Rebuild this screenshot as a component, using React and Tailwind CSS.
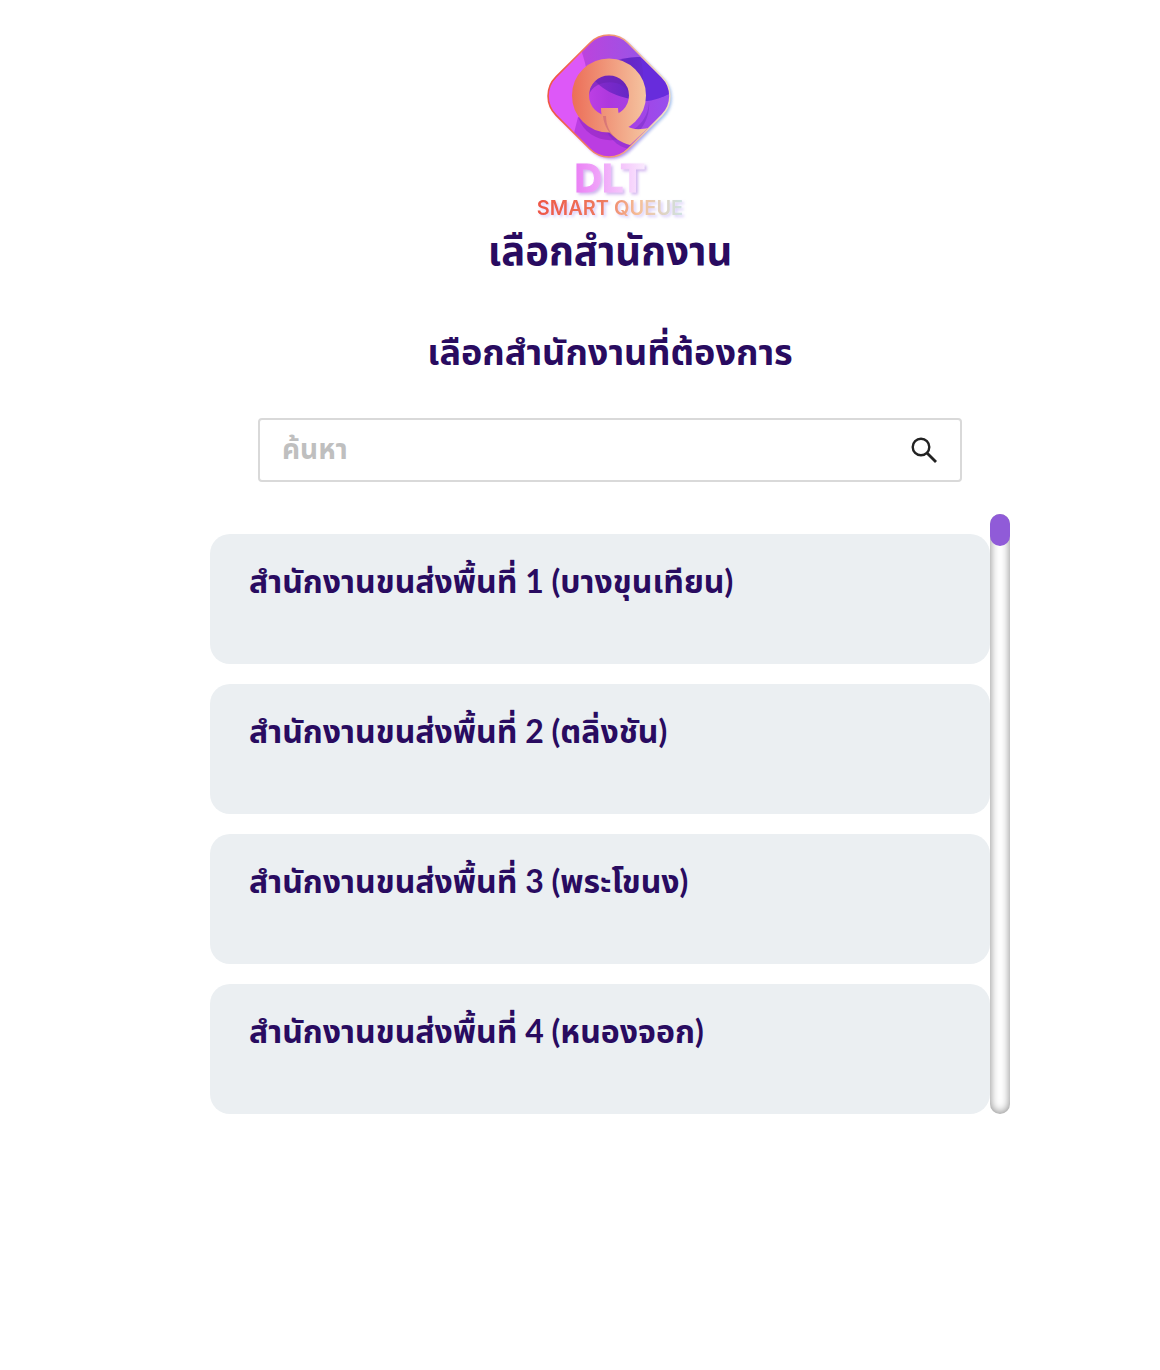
import React, { useState } from "react";

const offices = [
  "สำนักงานขนส่งพื้นที่ 1 (บางขุนเทียน)",
  "สำนักงานขนส่งพื้นที่ 2 (ตลิ่งชัน)",
  "สำนักงานขนส่งพื้นที่ 3 (พระโขนง)",
  "สำนักงานขนส่งพื้นที่ 4 (หนองจอก)",
];

function Logo() {
  return (
    <svg className="h-[200px] w-[160px]" viewBox="0 0 160 200" role="img" aria-label="DLT Smart Queue">
      <defs>
        <linearGradient id="base" gradientUnits="userSpaceOnUse" x1="18" y1="0" x2="140" y2="0">
          <stop offset="0" stopColor="#d94df0" />
          <stop offset="0.5" stopColor="#ae38de" />
          <stop offset="1" stopColor="#9750ee" />
        </linearGradient>
        <linearGradient id="top" gradientUnits="userSpaceOnUse" x1="50" y1="0" x2="120" y2="0">
          <stop offset="0" stopColor="#bd43dc" />
          <stop offset="1" stopColor="#9456e8" />
        </linearGradient>
        <linearGradient id="deep" gradientUnits="userSpaceOnUse" x1="60" y1="0" x2="139" y2="0">
          <stop offset="0" stopColor="#8a2acb" />
          <stop offset="0.5" stopColor="#6527c6" />
          <stop offset="1" stopColor="#6a32e4" />
        </linearGradient>
        <linearGradient id="qfill" gradientUnits="userSpaceOnUse" x1="42" y1="0" x2="117" y2="0">
          <stop offset="0" stopColor="#ec6e58" />
          <stop offset="1" stopColor="#f5c5a1" />
        </linearGradient>
        <linearGradient id="edge" gradientTransform="rotate(-45 0.5 0.5)">
          <stop offset="0" stopColor="#ef5a45" />
          <stop offset="0.6" stopColor="#f2a078" />
          <stop offset="1" stopColor="#f0dcc4" />
        </linearGradient>
        <linearGradient id="glow" gradientTransform="rotate(-45 0.5 0.5)">
          <stop offset="0" stopColor="#e45af0" />
          <stop offset="0.5" stopColor="#9b5be8" />
          <stop offset="1" stopColor="#7fa8e8" />
        </linearGradient>
        <linearGradient id="dlt" gradientUnits="userSpaceOnUse" x1="43" y1="0" x2="118" y2="0">
          <stop offset="0" stopColor="#ea7df5" />
          <stop offset="0.5" stopColor="#f2b4fa" />
          <stop offset="1" stopColor="#faeefe" />
        </linearGradient>
        <linearGradient id="name" gradientUnits="userSpaceOnUse" x1="8" y1="0" x2="152" y2="0">
          <stop offset="0" stopColor="#ee5745" />
          <stop offset="0.45" stopColor="#ee7a5e" />
          <stop offset="0.7" stopColor="#f5c09a" />
          <stop offset="1" stopColor="#cfe2e2" />
        </linearGradient>
        <clipPath id="tile">
          <rect x="28" y="20" width="102" height="102" rx="27" transform="rotate(45 79 71)" />
        </clipPath>
        <filter id="soft" x="-20%" y="-20%" width="140%" height="150%">
          <feGaussianBlur stdDeviation="1.8" />
        </filter>
        <filter id="dltShadow" x="-20%" y="-20%" width="150%" height="150%">
          <feDropShadow dx="2" dy="2" stdDeviation="1.5" floodColor="#a56be0" floodOpacity="0.5" />
        </filter>
        <filter id="nameShadow" x="-20%" y="-20%" width="150%" height="170%">
          <feDropShadow dx="2" dy="2" stdDeviation="1.5" floodColor="#b49cf5" floodOpacity="0.5" />
        </filter>
      </defs>

      <rect x="30" y="22" width="102" height="102" rx="27" transform="rotate(45 81 73)" fill="url(#glow)" opacity="0.75" filter="url(#soft)" />
      <g clipPath="url(#tile)">
        <rect width="160" height="140" fill="url(#base)" />
        <path d="M52 0H140V60L92 34L54 44Z" fill="url(#top)" />
        <path d="M10 0H52V28C54 34 57 42 57 54C50 70 47 84 51 112H10Z" fill="#dd58f8" />
        <path d="M60 50C72 40 92 31 110 32L145 66C120 82 78 76 60 50Z" fill="url(#deep)" />
        <path d="M110 32C114 45 114 57 110 76C126 77 138 70 145 64Z" fill="#672cdc" />
        <path d="M48 92C62 110 88 118 112 108L80 140L44 108Z" fill="#bb3de2" />
        <path d="M48 92C56 116 85 122 104 107L90 98Z" fill="#8c25bd" opacity="0.55" />
        <path d="M119 76C119 92 108 104 98 107L109 106C116 98 120 88 119 76Z" fill="#752bc4" opacity="0.5" />
        <path d="M59 70A20 20 0 0 1 99 70C96 53 64 53 59 70Z" fill="#6723ae" opacity="0.55" />
      </g>
      <path d="M74 99C77 111 87 122 99 124L102 121L84 98Z" fill="#752bc4" opacity="0.45" />
      <rect x="28" y="20" width="102" height="102" rx="27" transform="rotate(45 79 71)" fill="none" stroke="url(#edge)" strokeWidth="1.6" />
      <circle cx="79" cy="70.5" r="28.5" fill="none" stroke="url(#qfill)" strokeWidth="17" />
      <path d="M71 83H88C88 92 93 100 101 103C107 105 113 104 118 103L100 120C82 115 71 101 71 83Z" fill="url(#qfill)" />
      <path d="M73 91C74 101 79 109 87 114C79 108 76 99 76 91Z" fill="#b64c76" opacity="0.4" />

      <g fontFamily="Inter, sans-serif" textAnchor="middle">
        <text x="80" y="167" fontSize="38" fontWeight="700" fill="url(#dlt)" stroke="url(#dlt)" strokeWidth="1" filter="url(#dltShadow)">DLT</text>
        <text x="80" y="190" fontSize="20" fontWeight="600" fill="url(#name)" filter="url(#nameShadow)">SMART QUEUE</text>
      </g>
    </svg>
  );
}

export default function App() {
  const [query, setQuery] = useState("");
  return (
    <main className="flex min-h-screen flex-col items-center bg-white pt-[25px] pl-15 font-['Noto_Sans','Noto_Sans_Thai',sans-serif] font-bold text-[#290b60]">
      <Logo />
      <h1 className="text-[40px] leading-[50px]">เลือกสำนักงาน</h1>
      <h2 className="mt-12 text-[36px] leading-[58px]">เลือกสำนักงานที่ต้องการ</h2>

      <div className="mt-[37px] flex h-16 w-full max-w-[704px] items-center rounded border-2 border-[#d9d9d9] px-[22px]">
        <input
          type="text"
          aria-label="ค้นหา"
          placeholder="ค้นหา"
          value={query}
          onChange={(e) => setQuery(e.target.value)}
          className="h-full min-w-0 flex-1 bg-transparent pb-1 text-[28px] outline-none placeholder:text-[#bfbfbf]"
        />
        <button type="button" aria-label="ค้นหา" className="text-[#222]">
          <svg className="size-7" viewBox="0 0 28 28" fill="none" stroke="currentColor" strokeWidth="2.4">
            <circle cx="11" cy="11" r="8.3" />
            <path d="M17 17L26 26" strokeWidth="2.8" />
          </svg>
        </button>
      </div>

      <div className="mt-8 flex w-full max-w-[800px]">
        <ul className="flex min-w-0 flex-1 flex-col gap-5 pt-5">
          {offices.map((office) => (
            <li key={office}>
              <button type="button" className="flex h-[130px] w-full items-start rounded-[20px] bg-[#ebeff2] px-[39px] pt-6 text-left font-[Lato,'Noto_Sans_Thai','Noto_Sans',sans-serif] text-[32px] leading-[46px]">
                {office}
              </button>
            </li>
          ))}
        </ul>
        <div className="w-5 rounded-[10px] shadow-[inset_0_0_10px_#808080]">
          <div className="h-8 rounded-[10px] bg-[#905bd8]" />
        </div>
      </div>
    </main>
  );
}
